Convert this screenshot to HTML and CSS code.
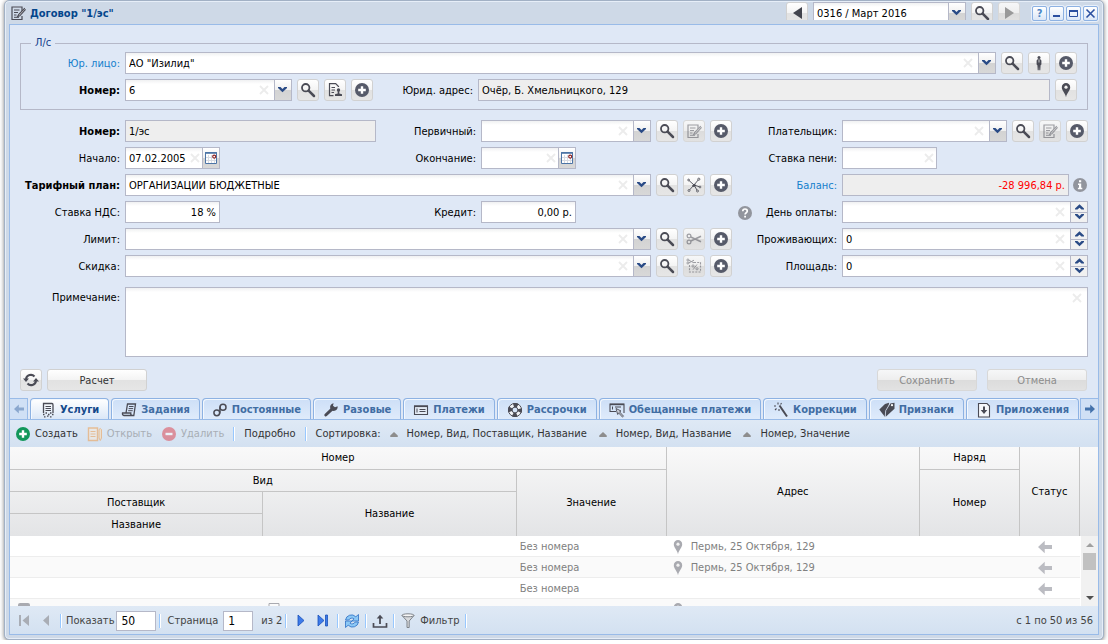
FILE: index.html
```html
<!DOCTYPE html>
<html lang="ru">
<head>
<meta charset="utf-8">
<title>Договор "1/эс"</title>
<link rel="stylesheet" href="styles.css">
</head>
<body>
<svg class="sprite" aria-hidden="true">
  <symbol id="i-search" viewBox="0 0 16 16"><circle cx="5.7" cy="5.7" r="3.7" fill="none" stroke="currentColor" stroke-width="1.8"/><path d="M8.6 8.6 14 14" stroke="currentColor" stroke-width="2.5" stroke-linecap="round"/></symbol>
  <symbol id="i-plus" viewBox="0 0 16 16"><circle cx="8" cy="8" r="7" fill="currentColor"/><path d="M8 4.2v7.6M4.2 8h7.6" stroke="#fff" stroke-width="2.4"/></symbol>
  <symbol id="i-doc-edit" viewBox="0 0 16 16"><path d="M12 6V2H2v12.5h10V11" fill="none" stroke="currentColor" stroke-width="1.2"/><path d="M4 5h5.500M4 7.500h4M4 10h2.500M4 12.300h5" stroke="currentColor"/><path d="M14.800 3.200 8.600 9.600 7.600 11.600 9.800 10.800 15.600 4.400" fill="#ddd" stroke="currentColor" stroke-width="1.100"/></symbol>
  <symbol id="i-doc-user" viewBox="0 0 16 16"><path d="M11.500 5V4.500L8.700 1.700H2.500v12h4" fill="none" stroke="currentColor" stroke-width="1.200"/><path d="M4.500 5.500h3.500M4.500 8h3.500M4.500 10.500h2.500" stroke="currentColor"/><circle cx="11.500" cy="8" r="1.700" fill="currentColor"/><path d="M10.700 9h1.600v2.400l2.700.8V14H8v-1.800l2.700-.8z" fill="currentColor"/></symbol>
  <symbol id="i-person" viewBox="0 0 16 16"><circle cx="8" cy="2.500" r="1.500" fill="currentColor"/><path d="M6.600 4.300h2.800l1 1.200V9.500l-.8.700-.3 5H8.300L8 11l-.3 4.200H6.700l-.3-5-.8-.7V5.500z" fill="currentColor"/><path d="M8 5v2.500" stroke="#eee" stroke-width=".8"/></symbol>
  <symbol id="i-pin" viewBox="0 0 16 16"><path d="M8 1a4.200 4.200 0 0 0-4.200 4.200C3.800 8.500 7 10.500 8 15.200c1-4.700 4.200-6.700 4.200-10A4.200 4.200 0 0 0 8 1z" fill="currentColor"/><circle cx="8" cy="5.200" r="1.600" fill="#f2f2f2"/></symbol>
  <symbol id="i-graph" viewBox="0 0 16 16"><path d="M8 8 2.500 3M8 8l5-6M8 8l6 2M8 8l-5 5.500M8 8l3.500 6" fill="none" stroke="currentColor" stroke-width=".9"/><path d="m6 8.500 3-1.800 1.200 2.200-3 1z" fill="currentColor"/><g fill="#e8e8e8" stroke="currentColor" stroke-width=".8"><circle cx="2.600" cy="3" r=".9"/><circle cx="12.800" cy="2.200" r="1.100"/><circle cx="14" cy="10" r=".9"/><circle cx="3" cy="13.500" r="1"/><circle cx="11.500" cy="14" r="1"/></g></symbol>
  <symbol id="i-scissors" viewBox="0 0 16 16"><g fill="none" stroke="currentColor" stroke-width="1.200"><circle cx="3" cy="5" r="1.900"/><circle cx="3" cy="11" r="1.900"/><path d="M4.800 6 15 10.800M4.800 10 15 5.200" stroke-width="1.500"/></g></symbol>
  <symbol id="i-coupon" viewBox="0 0 16 16"><path d="M8 4.500h6.500v9.500H3.500V7" fill="none" stroke="currentColor" stroke-dasharray="2 1.200" stroke-width="1.100"/><circle cx="1.900" cy="2" r="1" fill="none" stroke="currentColor"/><circle cx="1.900" cy="5" r="1" fill="none" stroke="currentColor"/><path d="m3 2.400 5 2.400M3 4.800l5-2.600M7 11.700l4-5.200" stroke="currentColor"/><circle cx="7" cy="8" r="1.100" fill="none" stroke="currentColor"/><circle cx="11" cy="10.800" r="1.100" fill="none" stroke="currentColor"/></symbol>
  <symbol id="i-x" viewBox="0 0 10 10"><path d="m1 1 8 8M9 1 1 9" stroke="currentColor" stroke-width="1.900"/></symbol>
  <symbol id="i-chev" viewBox="0 0 9 6"><path d="M0 0h2.500l2 1.900L6.500 0H9v1L4.500 5.300 0 1z" fill="#2a4b86"/></symbol>
  <symbol id="i-chev-up" viewBox="0 0 9 6"><path d="M0 5.600h2.500l2-1.900 2 1.900H9v-1L4.500.3 0 4.600z" fill="#2a4b86"/></symbol>
  <symbol id="i-cal" viewBox="0 0 14 14"><path d="M1.500 1.500h11v11h-11z" fill="#fff" stroke="#4d75a6"/><path d="M1 2h12" stroke="#4d75a6" stroke-width="1.600"/><path d="M4.500 4v8M7.500 4v8M10.500 4v8M2 6.500h10M2 9.500h10" stroke="#d8dbe2"/><circle cx="10.200" cy="5.600" r="1.500" fill="#fff" stroke="#8c2020" stroke-width="1.100"/></symbol>
  <symbol id="i-refresh" viewBox="0 0 16 16"><g fill="none" stroke="currentColor" stroke-width="2.100"><path d="M3 7a5 5 0 0 1 8.500-2.600"/><path d="M13 9a5 5 0 0 1-8.500 2.600"/></g><path d="M0 6.500h6L3 10zM10 9.500h6L13 6z" fill="currentColor"/></symbol>
  <symbol id="i-question" viewBox="0 0 16 16"><circle cx="8" cy="8" r="7" fill="#92959d"/><path d="M5.800 6.300c0-3 4.500-3 4.500-.2 0 1.700-2.200 1.600-2.200 3.400" fill="none" stroke="#fff" stroke-width="1.700"/><path d="M7.200 10.700H9v1.700H7.200z" fill="#fff"/></symbol>
  <symbol id="i-info" viewBox="0 0 16 16"><circle cx="8" cy="8" r="7" fill="#92959d"/><path d="M7 3.200h2.200v2H7zM6 6.500h3.200v4.300h1.100v1.500H5.900v-1.500H7V8H6z" fill="#fff"/></symbol>
  <symbol id="i-services" viewBox="0 0 16 16"><path d="M3.500 11V1.500h8.500q1 0 1 1.500v8" fill="none" stroke="currentColor" stroke-width="1.300"/><path d="M5.500 4.500H11M5.500 6.500H11M5.500 8.500H11" stroke="currentColor"/><path d="M3 12.500h1.500M5.500 11h1.500M8 12.500h1.500M10 11h1.500M12 12.500h1.500M4 14.800h1.500M7 14.200h1.500M10 14.800h1.500" stroke="currentColor" stroke-width="1.300"/></symbol>
  <symbol id="i-tasks" viewBox="0 0 16 16"><path d="M5 11 6.500 2h8l-1.700 11.500H3q-2-.5-1.500-2.500h8.300q-.3 2.300 1.200 2.500" fill="none" stroke="currentColor" stroke-width="1.300"/><path d="M8 4.500h4.500M7.600 6.600h4.500M7.200 8.700h4.500" stroke="currentColor"/></symbol>
  <symbol id="i-infinity" viewBox="0 0 16 16"><circle cx="11" cy="5.300" r="3" fill="none" stroke="currentColor" stroke-width="1.500"/><circle cx="4.800" cy="10.800" r="2.900" fill="none" stroke="currentColor" stroke-width="1.500"/><path d="M8.200 4.500C7 7 9 9 7.500 11.500" fill="none" stroke="currentColor" stroke-width="1.500"/></symbol>
  <symbol id="i-wrench" viewBox="0 0 16 16"><path d="M2.800 13 9 7.200" stroke="currentColor" stroke-width="3" stroke-linecap="round"/><path d="M14.600 4.300A3.800 3.800 0 1 1 10.600 1.300L10 3.800l2 1.500z" fill="currentColor"/></symbol>
  <symbol id="i-card" viewBox="0 0 16 16"><path d="M1.500 4h13v8.500h-13z" fill="#e4ebf5" stroke="currentColor" stroke-width="1.100"/><path d="M1 4.300h14" stroke="currentColor" stroke-width="1.600"/><path d="M4 6.500v4" stroke="currentColor"/><path d="M6.500 7.500h6M6.500 9.500h6" stroke="currentColor" stroke-width="1.200"/></symbol>
  <symbol id="i-buoy" viewBox="0 0 16 16"><circle cx="8" cy="8" r="5" fill="none" stroke="#f2f4f8" stroke-width="4"/><circle cx="8" cy="8" r="5" fill="none" stroke="currentColor" stroke-width="4" stroke-dasharray="4.300 3.550" stroke-dashoffset="2.150"/><circle cx="8" cy="8" r="6.600" fill="none" stroke="currentColor"/><circle cx="8" cy="8" r="2.900" fill="none" stroke="currentColor"/></symbol>
  <symbol id="i-promise" viewBox="0 0 16 16"><path d="M7 9.500H1V2h14v9" fill="none" stroke="currentColor" stroke-width="1.100"/><path d="M1 2.500h14" stroke="currentColor" stroke-width="1.400"/><path d="M3.500 4.500v3M6 5h6" stroke="currentColor"/><path d="m7 6.500 5 2.500-1.500.8 4 4.400-1 .9-4-4.300-.8 1.700z" fill="#d5d9e2" stroke="currentColor" stroke-width=".9"/></symbol>
  <symbol id="i-wand" viewBox="0 0 16 16"><path d="m6.500 3.500 7.500 11" stroke="currentColor" stroke-width="2"/><path d="M5 .500v2M8.500 1 7.600 2.500M1 4h2M2 8l1.500-1.500M6 7v2" stroke="currentColor" stroke-width="1.100"/></symbol>
  <symbol id="i-tags" viewBox="0 0 16 16"><path d="M.3 7.500 6 2l4-1.200L9.500 6l-3.500 9z" fill="currentColor"/><path d="M6.500 15 7 9l4-7.500L15.500.7v6z" fill="currentColor"/><path d="m11 1.500-4.300 7.200L6.200 15" fill="none" stroke="#dfe9f6" stroke-width=".8"/><circle cx="13" cy="3.200" r="1.100" fill="#fff"/></symbol>
  <symbol id="i-attach" viewBox="0 0 16 16"><path d="M2.500 1.500h8.500l2.500 2.500v11h-11z" fill="#f5f7fa" stroke="currentColor" stroke-width="1.100"/><path d="M7 4.500h2V8h2.300L8 12 4.700 8H7z" fill="currentColor"/></symbol>
  <symbol id="i-arrow-l" viewBox="0 0 10 10"><path d="M0 5 4.800.500v3H10v3H4.800v3z" fill="currentColor"/></symbol>
  <symbol id="i-arrow-r" viewBox="0 0 10 10"><path d="M10 5 5.200.500v3H0v3h5.200v3z" fill="currentColor"/></symbol>
  <symbol id="i-open" viewBox="0 0 16 16"><path d="M1.500 2h9v12.500h-9z" fill="#f8eadb" stroke="#f0963c" stroke-width="1.400"/><path d="M3.500 5.500h5M3.500 8h5M3.500 10.500h5" stroke="#f0963c"/><path d="M12 3.500q1.200-2 2.500 0V12l-1.200 2.500L12 12z" fill="#fbdcb0" stroke="#f0963c"/></symbol>
  <symbol id="i-sort" viewBox="0 0 9 6"><path d="M4.500 0 9 4.300V6H0V4.300z" fill="#8d8d8d"/></symbol>
  <symbol id="i-sync" viewBox="0 0 16 16"><path d="M1.500 7a6 6 0 0 1 10.300-3.200L14.500 1.500V8H8l2-2.200A3.500 3.500 0 0 0 4.800 7z" fill="#8cc8f5" stroke="#2e6fc4" stroke-width=".8"/><path d="M14.500 9A6 6 0 0 1 4.200 12.200L1.500 14.500V8H8L6 10.200A3.500 3.500 0 0 0 11.200 9z" fill="#8cc8f5" stroke="#2e6fc4" stroke-width=".8"/></symbol>
  <symbol id="i-export" viewBox="0 0 16 16"><path d="M1.500 10v4h13v-4" fill="none" stroke="currentColor" stroke-width="1.700"/><path d="M8 11V4" stroke="currentColor" stroke-width="1.800"/><path d="m4.700 5.500 3.300-3.700 3.300 3.700z" fill="currentColor"/></symbol>
  <symbol id="i-funnel" viewBox="0 0 16 16"><path d="M2 2.500 7 8v6.500h2.200V8L14 2.500z" fill="#d8dadd" stroke="#7f848b"/><ellipse cx="8" cy="2.300" rx="6" ry="1.500" fill="#f6f6f6" stroke="#7f848b"/></symbol>
</svg>

<main class="window">
  <header class="titlebar">
    <svg class="icon"><use href="#i-doc-edit"/></svg>
    <h1>Договор "1/эс"</h1>
    <div class="period">
      <button class="btn" type="button" aria-label="Предыдущий период"><span class="tri tri-left"></span></button>
      <div class="field period-field"><select aria-label="Период"><option>0316 / Март 2016</option></select><span class="trigger"><svg class="chev"><use href="#i-chev"/></svg></span></div>
      <button class="btn" type="button" aria-label="Найти период"><svg class="icon"><use href="#i-search"/></svg></button>
      <button class="btn" type="button" aria-label="Следующий период" disabled><span class="tri tri-right"></span></button>
    </div>
    <div class="tools">
      <button type="button" class="tool tool-help">?</button>
      <button type="button" class="tool" aria-label="Свернуть"><svg viewBox="0 0 11 11"><path d="M2 8h7" stroke="currentColor" stroke-width="2"/></svg></button>
      <button type="button" class="tool" aria-label="Развернуть"><svg viewBox="0 0 11 11"><path d="M1.500 2.500h8v6h-8z" fill="none" stroke="currentColor"/><path d="M1 3h9" stroke="currentColor" stroke-width="2"/></svg></button>
      <button type="button" class="tool" aria-label="Закрыть"><svg viewBox="0 0 11 11"><path d="m1.500 1.500 8 8M9.500 1.500l-8 8" stroke="currentColor" stroke-width="1.600"/></svg></button>
    </div>
  </header>

  <div class="content">
    <form class="form">
      <fieldset>
        <legend>Л/с</legend>
        <div class="row">
          <label class="label link" for="legal">Юр. лицо:</label>
          <div class="field"><select id="legal"><option>АО "Изилид"</option></select><button type="button" class="clear" aria-label="Очистить"><svg><use href="#i-x"/></svg></button><span class="trigger"><svg class="chev"><use href="#i-chev"/></svg></span></div>
          <button type="button" class="btn" aria-label="Найти"><svg class="icon"><use href="#i-search"/></svg></button>
          <button type="button" class="btn" aria-label="Лицо"><svg class="icon"><use href="#i-person"/></svg></button>
          <button type="button" class="btn" aria-label="Добавить"><svg class="icon soft"><use href="#i-plus"/></svg></button>
        </div>
        <div class="row">
          <label class="label bold" for="account">Номер:</label>
          <div class="field account"><select id="account"><option>6</option></select><button type="button" class="clear" aria-label="Очистить"><svg><use href="#i-x"/></svg></button><span class="trigger"><svg class="chev"><use href="#i-chev"/></svg></span></div>
          <button type="button" class="btn" aria-label="Найти"><svg class="icon"><use href="#i-search"/></svg></button>
          <button type="button" class="btn" aria-label="Карточка"><svg class="icon"><use href="#i-doc-user"/></svg></button>
          <button type="button" class="btn" aria-label="Добавить"><svg class="icon soft"><use href="#i-plus"/></svg></button>
          <label class="label" for="address">Юрид. адрес:</label>
          <div class="field readonly"><input id="address" value="Очёр, Б. Хмельницкого, 129" readonly></div>
          <button type="button" class="btn" aria-label="На карте"><svg class="icon"><use href="#i-pin"/></svg></button>
        </div>
      </fieldset>

      <div class="fields">
        <div class="row"><label class="label bold" for="num">Номер:</label><div class="field readonly"><input id="num" value="1/эс" readonly></div></div>
        <div class="row"><label class="label" for="primary">Первичный:</label>
          <div class="field"><select id="primary"><option></option></select><button type="button" class="clear" aria-label="Очистить"><svg><use href="#i-x"/></svg></button><span class="trigger"><svg class="chev"><use href="#i-chev"/></svg></span></div>
          <button type="button" class="btn" aria-label="Найти"><svg class="icon"><use href="#i-search"/></svg></button>
          <button type="button" class="btn" aria-label="Изменить" disabled><svg class="icon"><use href="#i-doc-edit"/></svg></button>
          <button type="button" class="btn" aria-label="Добавить"><svg class="icon soft"><use href="#i-plus"/></svg></button></div>
        <div class="row side"><label class="label" for="payer">Плательщик:</label>
          <div class="field"><select id="payer"><option></option></select><button type="button" class="clear" aria-label="Очистить"><svg><use href="#i-x"/></svg></button><span class="trigger"><svg class="chev"><use href="#i-chev"/></svg></span></div>
          <button type="button" class="btn" aria-label="Найти"><svg class="icon"><use href="#i-search"/></svg></button>
          <button type="button" class="btn" aria-label="Изменить" disabled><svg class="icon"><use href="#i-doc-edit"/></svg></button>
          <button type="button" class="btn" aria-label="Добавить"><svg class="icon soft"><use href="#i-plus"/></svg></button></div>

        <div class="row"><label class="label" for="start">Начало:</label><div class="field short"><input id="start" value="07.02.2005"><button type="button" class="clear" aria-label="Очистить"><svg><use href="#i-x"/></svg></button><button type="button" class="trigger" aria-label="Календарь"><svg class="cal"><use href="#i-cal"/></svg></button></div></div>
        <div class="row"><label class="label" for="end">Окончание:</label><div class="field short"><input id="end"><button type="button" class="clear" aria-label="Очистить"><svg><use href="#i-x"/></svg></button><button type="button" class="trigger" aria-label="Календарь"><svg class="cal"><use href="#i-cal"/></svg></button></div></div>
        <div class="row side"><label class="label" for="penalty">Ставка пени:</label><div class="field short"><input id="penalty"><button type="button" class="clear" aria-label="Очистить"><svg><use href="#i-x"/></svg></button></div></div>

        <div class="row wide"><label class="label bold" for="tariff">Тарифный план:</label>
          <div class="field"><select id="tariff"><option>ОРГАНИЗАЦИИ БЮДЖЕТНЫЕ</option></select><button type="button" class="clear" aria-label="Очистить"><svg><use href="#i-x"/></svg></button><span class="trigger"><svg class="chev"><use href="#i-chev"/></svg></span></div>
          <button type="button" class="btn" aria-label="Найти"><svg class="icon"><use href="#i-search"/></svg></button>
          <button type="button" class="btn" aria-label="Связи"><svg class="icon"><use href="#i-graph"/></svg></button>
          <button type="button" class="btn" aria-label="Добавить"><svg class="icon soft"><use href="#i-plus"/></svg></button></div>
        <div class="row side"><label class="label link" for="balance">Баланс:</label><div class="field readonly num"><input class="negative" id="balance" value="-28 996,84 р." readonly></div><svg class="icon hint"><use href="#i-info"/></svg></div>

        <div class="row"><label class="label" for="vat">Ставка НДС:</label><div class="field short num"><input id="vat" value="18 %"></div></div>
        <div class="row"><label class="label" for="credit">Кредит:</label><div class="field short num"><input id="credit" value="0,00 р."></div></div>
        <div class="row side"><span class="label label-hint"><svg class="icon"><use href="#i-question"/></svg><label for="payday">День оплаты:</label></span><div class="field"><input id="payday"><button type="button" class="clear" aria-label="Очистить"><svg><use href="#i-x"/></svg></button><span class="spinner"><button type="button" aria-label="Больше"><svg class="chev"><use href="#i-chev-up"/></svg></button><button type="button" aria-label="Меньше"><svg class="chev"><use href="#i-chev"/></svg></button></span></div></div>

        <div class="row wide"><label class="label" for="limit">Лимит:</label>
          <div class="field"><select id="limit"><option></option></select><button type="button" class="clear" aria-label="Очистить"><svg><use href="#i-x"/></svg></button><span class="trigger"><svg class="chev"><use href="#i-chev"/></svg></span></div>
          <button type="button" class="btn" aria-label="Найти"><svg class="icon"><use href="#i-search"/></svg></button>
          <button type="button" class="btn" aria-label="Отрезать" disabled><svg class="icon"><use href="#i-scissors"/></svg></button>
          <button type="button" class="btn" aria-label="Добавить"><svg class="icon soft"><use href="#i-plus"/></svg></button></div>
        <div class="row side"><label class="label" for="people">Проживающих:</label><div class="field"><input id="people" value="0"><button type="button" class="clear" aria-label="Очистить"><svg><use href="#i-x"/></svg></button><span class="spinner"><button type="button" aria-label="Больше"><svg class="chev"><use href="#i-chev-up"/></svg></button><button type="button" aria-label="Меньше"><svg class="chev"><use href="#i-chev"/></svg></button></span></div></div>

        <div class="row wide"><label class="label" for="discount">Скидка:</label>
          <div class="field"><select id="discount"><option></option></select><button type="button" class="clear" aria-label="Очистить"><svg><use href="#i-x"/></svg></button><span class="trigger"><svg class="chev"><use href="#i-chev"/></svg></span></div>
          <button type="button" class="btn" aria-label="Найти"><svg class="icon"><use href="#i-search"/></svg></button>
          <button type="button" class="btn" aria-label="Купон" disabled><svg class="icon"><use href="#i-coupon"/></svg></button>
          <button type="button" class="btn" aria-label="Добавить"><svg class="icon soft"><use href="#i-plus"/></svg></button></div>
        <div class="row side"><label class="label" for="area">Площадь:</label><div class="field"><input id="area" value="0"><button type="button" class="clear" aria-label="Очистить"><svg><use href="#i-x"/></svg></button><span class="spinner"><button type="button" aria-label="Больше"><svg class="chev"><use href="#i-chev-up"/></svg></button><button type="button" aria-label="Меньше"><svg class="chev"><use href="#i-chev"/></svg></button></span></div></div>
      </div>

      <div class="row note-row"><label class="label" for="note">Примечание:</label><div class="field note"><textarea id="note"></textarea><button type="button" class="clear" aria-label="Очистить"><svg><use href="#i-x"/></svg></button></div></div>

      <div class="actions">
        <button type="button" class="btn" aria-label="Обновить"><svg class="icon"><use href="#i-refresh"/></svg></button>
        <button type="button" class="btn text">Расчет</button>
        <span class="actions-end">
          <button type="button" class="btn text" disabled>Сохранить</button>
          <button type="button" class="btn text" disabled>Отмена</button>
        </span>
      </div>
    </form>

    <nav class="tabs">
      <button type="button" class="scroll off" aria-label="Влево"><svg><use href="#i-arrow-l"/></svg></button>
      <div class="tablist" role="tablist">
        <button type="button" role="tab" class="tab active"><svg class="icon"><use href="#i-services"/></svg>Услуги</button>
        <button type="button" role="tab" class="tab"><svg class="icon"><use href="#i-tasks"/></svg>Задания</button>
        <button type="button" role="tab" class="tab"><svg class="icon"><use href="#i-infinity"/></svg>Постоянные</button>
        <button type="button" role="tab" class="tab"><svg class="icon"><use href="#i-wrench"/></svg>Разовые</button>
        <button type="button" role="tab" class="tab"><svg class="icon"><use href="#i-card"/></svg>Платежи</button>
        <button type="button" role="tab" class="tab"><svg class="icon"><use href="#i-buoy"/></svg>Рассрочки</button>
        <button type="button" role="tab" class="tab"><svg class="icon"><use href="#i-promise"/></svg>Обещанные платежи</button>
        <button type="button" role="tab" class="tab"><svg class="icon"><use href="#i-wand"/></svg>Коррекции</button>
        <button type="button" role="tab" class="tab"><svg class="icon"><use href="#i-tags"/></svg>Признаки</button>
        <button type="button" role="tab" class="tab"><svg class="icon"><use href="#i-attach"/></svg>Приложения</button>
      </div>
      <button type="button" class="scroll" aria-label="Вправо"><svg><use href="#i-arrow-r"/></svg></button>
    </nav>

    <div class="toolbar">
      <button type="button" class="tb"><svg class="icon green"><use href="#i-plus"/></svg>Создать</button>
      <button type="button" class="tb" disabled><svg class="icon"><use href="#i-open"/></svg>Открыть</button>
      <button type="button" class="tb" disabled><svg class="icon" viewBox="0 0 16 16"><circle cx="8" cy="8" r="7" fill="#dc3c48"/><path d="M4.500 8h7" stroke="#fff" stroke-width="2.400"/></svg>Удалить</button>
      <span class="sep"></span>
      <button type="button" class="tb">Подробно</button>
      <span class="sep"></span>
      <span class="tb">Сортировка:</span>
      <button type="button" class="tb sort"><svg><use href="#i-sort"/></svg>Номер, Вид, Поставщик, Название</button>
      <button type="button" class="tb sort"><svg><use href="#i-sort"/></svg>Номер, Вид, Название</button>
      <button type="button" class="tb sort"><svg><use href="#i-sort"/></svg>Номер, Значение</button>
    </div>

    <div class="grid">
      <table>
        <colgroup><col><col><col class="c-value"><col><col class="c-order"><col class="c-status"><col class="c-end"></colgroup>
        <thead>
          <tr><th colspan="3">Номер</th><th rowspan="4" class="low">Адрес</th><th>Наряд</th><th rowspan="4" class="low">Статус</th><th rowspan="4" class="low end"></th></tr>
          <tr><th colspan="2">Вид</th><th rowspan="3" class="low">Значение</th><th rowspan="3" class="low">Номер</th></tr>
          <tr><th>Поставщик</th><th rowspan="2" class="low">Название</th></tr>
          <tr><th class="low">Название</th></tr>
        </thead>
        <tbody>
          <tr><td></td><td></td><td>Без номера</td><td><span class="place"><svg class="icon"><use href="#i-pin"/></svg>Пермь, 25 Октября, 129</span></td><td></td><td class="status"><svg><use href="#i-arrow-l"/></svg></td><td></td></tr>
          <tr><td></td><td></td><td>Без номера</td><td><span class="place"><svg class="icon"><use href="#i-pin"/></svg>Пермь, 25 Октября, 129</span></td><td></td><td class="status"><svg><use href="#i-arrow-l"/></svg></td><td></td></tr>
          <tr><td></td><td></td><td>Без номера</td><td></td><td></td><td class="status"><svg><use href="#i-arrow-l"/></svg></td><td></td></tr>
          <tr><td><span class="place lead"><svg class="icon" viewBox="0 0 16 16"><rect x="2" y="1" width="12" height="14" rx="2" fill="currentColor"/></svg></span></td><td><span class="place"><svg class="icon" viewBox="0 0 16 16"><path d="M3 1.500h10v13H3z" fill="none" stroke="currentColor"/></svg></span></td><td></td><td><span class="place"><svg class="icon"><use href="#i-pin"/></svg></span></td><td></td><td></td><td></td></tr>
        </tbody>
      </table>
      <div class="scrollbar" aria-hidden="true"><span class="tri tri-up"></span><span class="thumb"></span><span class="tri tri-down"></span></div>
    </div>

    <footer class="toolbar paging">
      <button type="button" class="pg" disabled aria-label="Первая"><svg viewBox="0 0 12 13"><path d="M1 1h2v11H1zM11 1v11L4.500 6.500z" fill="#a9adb5"/></svg></button>
      <button type="button" class="pg" disabled aria-label="Предыдущая"><svg viewBox="0 0 12 13"><path d="M9 1v11L3 6.500z" fill="#a9adb5"/></svg></button>
      <span class="sep"></span>
      <label class="show" for="size">Показать</label><input class="page-input size" id="size" value="50">
      <span class="sep"></span>
      <label class="page-label" for="page">Страница</label><input class="page-input" id="page" value="1">
      <span class="total">из 2</span>
      <span class="sep"></span>
      <button type="button" class="pg" aria-label="Следующая"><svg viewBox="0 0 12 13"><path d="M3 1v11l6-5.500z" fill="#3d7bea" stroke="#1b50b8" stroke-width=".8"/></svg></button>
      <button type="button" class="pg" aria-label="Последняя"><svg viewBox="0 0 12 13"><path d="M1 1v11l6-5.500zM8.500 1h2v11h-2z" fill="#3d7bea" stroke="#1b50b8" stroke-width=".8"/></svg></button>
      <span class="sep"></span>
      <button type="button" class="tb" aria-label="Обновить"><svg class="icon"><use href="#i-sync"/></svg></button>
      <span class="sep"></span>
      <button type="button" class="tb" aria-label="Выгрузить"><svg class="icon"><use href="#i-export"/></svg></button>
      <span class="sep"></span>
      <button type="button" class="tb filter"><svg class="icon"><use href="#i-funnel"/></svg>Фильтр</button>
      <span class="sep"></span>
      <span class="range">с 1 по 50 из 56</span>
    </footer>
  </div>
</main>
</body>
</html>
```
FILE: styles.css
```css
* { box-sizing: border-box; }
body {
  margin: 0;
  background: #fff;
  font: 11px/14px "DejaVu Sans Condensed", Tahoma, "Noto Sans", sans-serif;
  color: #000;
}
button, input, select, textarea { font: inherit; color: inherit; margin: 0; padding: 0; border: 0; background: none; outline: 0; }
button { display: flex; align-items: center; justify-content: center; white-space: nowrap; }
svg { display: block; flex: none; }
.sprite { position: absolute; width: 0; height: 0; }
.icon { width: 16px; height: 16px; color: #4a4b55; }
.soft { color: #565a69; }
.green { color: #12975a; }
.chev { width: 9px; height: 6px; }

.window {
  display: flex;
  flex-direction: column;
  height: calc(100vh - 4px);
  margin: 0 4px;
  padding: 0 4px 4px;
  border: 1px solid #a2b1c5;
  border-radius: 5px;
  background: #ced9e7;
  box-shadow: inset 0 0 0 1px #e6eef8, 0 1px 4px rgba(0, 0, 0, .5);
}
.titlebar { display: flex; align-items: flex-start; height: 23px; padding: 1px 1px 0 0; }
.titlebar > .icon { margin: 3px 4px 0 1px; }
h1 { flex: 1; margin: 4px 0 0; font-size: 11px; line-height: 15px; color: #04468c; }
.period { display: flex; gap: 5px; height: 18px; overflow: hidden; }
.period-field { width: 153px; flex: none; }
.tools { display: flex; gap: 2px; margin: 4px 0 0 12px; }
.tool { width: 15px; height: 15px; border: 1px solid #8db2e3; border-radius: 2px; background: linear-gradient(#fff, #dbe7f7); color: #2a4fa0; box-shadow: 0 0 0 1px #e8f0fa; }
.tool-help { font-weight: bold; color: #4a86c5; }
.tool svg { width: 11px; height: 11px; }

.content { flex: 1; min-height: 0; display: flex; flex-direction: column; border: 1px solid #99bbe8; background: #dfe8f6; }
.form { padding: 11px 10px 7px; }
fieldset { display: grid; gap: 5px; min-width: 0; margin: 0 0 10px; padding: 2px 10px 8px 4px; border: 1px solid #b5b8c8; }
legend { margin-left: 6px; padding: 0 4px; color: #15428b; }
.fields { display: grid; grid-template-columns: repeat(3, minmax(0, 1fr)); gap: 5px 0; }
.wide { grid-column: span 2; }
.row { display: flex; align-items: center; gap: 5px; min-width: 0; }
.label { flex: none; width: 100px; padding-top: 1px; text-align: right; white-space: nowrap; }
fieldset .label { width: 95px; }
.side .label { width: 105px; }
.bold { font-weight: bold; }
.link { color: #157fcc; }
.label-hint { display: flex; align-items: center; justify-content: space-between; padding-left: 5px; }
.field { display: flex; flex: 1; align-items: stretch; min-width: 0; height: 22px; border: 1px solid #b5b8c8; background: linear-gradient(#f0f1f2, #fff 4px); }
.field input, .field select { flex: 1; min-width: 0; width: 0; padding: 1px 3px 0; }
.field select { appearance: none; }
.readonly { background: #eee; }
.short { flex: none; width: 95px; }
.account { flex: none; width: 167px; }
.num input { text-align: right; }
.field .negative { color: #f00; }
.hint { margin: 0 0 0 -2px; }
.clear { flex: none; width: 20px; color: #ececec; }
.clear svg { width: 10px; height: 10px; }
.trigger { flex: none; display: flex; align-items: center; justify-content: center; width: 17px; padding: 0 1px 1px 0; border-left: 1px solid #b5b8c8; background: linear-gradient(#fff, #f0f0f0 50%, #d3d3d3 51%, #d8d8d8); }
.short:not(.num) input { padding-right: 0; }
.short .clear { width: 15px; }
.cal { width: 14px; height: 14px; }
.spinner { display: flex; flex-direction: column; width: 17px; border-left: 1px solid #b5b8c8; }
.spinner button { flex: 1; background: #f1f1f1; }
.spinner button + button { border-top: 1px solid #b5b8c8; }
.btn { flex: none; width: 22px; height: 22px; border: 1px solid #d1d1d1; border-radius: 3px; background: linear-gradient(#fff, #f4f4f4 48%, #e2e2e2 52%, #e6e6e6); color: #333; }
.btn:disabled { background: linear-gradient(#f6f7f8, #eee 48%, #dcdcdc 52%, #e2e2e2); color: #8c8c8c; border-color: #d8d8d8; }
.btn:disabled .icon { opacity: .5; }
.btn.text { width: 100px; padding-top: 1px; }
.tri { border: 6px solid transparent; width: 0; height: 0; }
.tri-left { border-right: 9px solid #42444d; border-left: 0; }
.tri-right { border-left: 9px solid #999; border-right: 0; }
.note-row { margin-top: 10px; align-items: flex-start; }
.note-row .label { padding-top: 4px; }
.note { height: 70px; }
.note textarea { flex: 1; resize: none; padding: 3px; }
.note .clear { height: 20px; }
.actions { display: flex; gap: 5px; margin-top: 12px; }
.actions-end { display: flex; gap: 10px; margin-left: auto; padding-right: 1px; }

.tabs { display: flex; flex: none; height: 22px; border-bottom: 1px solid #99bbe8; background: #dfe8f6; }
.tablist { flex: 1; display: flex; gap: 2px; min-width: 0; padding: 0 1px 0 2px; overflow: hidden; }
.tab { flex: 1 1 auto; gap: 4px; height: 21px; padding: 1px 6px 0; border: 1px solid #8db2e3; border-bottom: 0; border-radius: 4px 4px 0 0; background: linear-gradient(#cddff7, #dfebfb); box-shadow: inset 1px 1px 0 #f3f8fe; font-weight: bold; color: #416da3; }
.tab.active { color: #15498b; background: linear-gradient(#fff, #dbe7f7); }
.scroll { width: 18px; height: 21px; border: 1px solid #99bbe8; border-width: 1px 1px 0 0; background: #d0e0f5; color: #4472ab; }
.scroll:last-child { border-width: 1px 0 0 1px; }
.scroll.off { color: #8aa7ce; }
.scroll svg { width: 10px; height: 10px; }

.toolbar { display: flex; flex: none; align-items: center; height: 27px; padding: 1px 5px 0; background: linear-gradient(#dfe9f5, #d3e1f1); color: #333; }
.tb { display: flex; align-items: center; gap: 4px; margin-right: 9px; white-space: nowrap; }
.tb:disabled { opacity: .5; color: #777; }
.sep { flex: none; width: 2px; height: 14px; border-left: 1px solid #98c8ff; border-right: 1px solid #fff; margin-right: 9px; }
.sort { gap: 9px; margin-right: 12px; }
.sort svg { width: 8px; height: 5px; }

.grid { position: relative; flex: 1; min-height: 0; overflow: hidden; background: #fff; }
table { width: 100%; border-collapse: separate; border-spacing: 0; table-layout: fixed; }
.c-value { width: 150px; }
.c-order { width: 100px; }
.c-status { width: 60px; }
.c-end { width: 18px; }
thead { background: linear-gradient(#f9f9f9, #e3e4e6); }
th { height: 22px; padding: 0; border: 1px solid #c5c5c5; border-width: 0 1px 1px 0; font-weight: normal; }
thead tr:first-child th { height: 23px; }
th.low { border-bottom: 0; }
th.end { border-right: 0; }
td { height: 21px; padding: 1px 3px 0; border-bottom: 1px solid #ededed; color: #808080; white-space: nowrap; }
tr:nth-child(even) td { background: #fafafa; }
tr td:last-child, tr:nth-child(even) td:last-child { border-bottom: 0; background: #fff; }
.place { display: flex; align-items: center; gap: 5px; }
.place .icon { color: #a9aab0; }
.lead { padding-left: 3px; }
td.status { padding-right: 13px; }
.status svg { width: 14px; height: 14px; margin: 0 auto; color: #bbbcc2; }
.scrollbar { position: absolute; top: 89px; right: 0; bottom: 0; width: 17px; display: flex; flex-direction: column; align-items: center; padding: 7px 0 6px; background: #f1f1f1; }
.scrollbar .tri { border-width: 4px; }
.scrollbar .tri-up { border-bottom-color: #a0a0a0; border-top: 0; }
.scrollbar .tri-down { border-top-color: #505050; border-bottom: 0; margin-top: auto; }
.thumb { width: 13px; height: 17px; margin-top: 6px; background: #c1c1c1; }

.paging { height: 28px; padding-left: 3px; color: #444; }
.pg { width: 22px; height: 22px; }
.pg svg { width: 12px; height: 13px; }
.paging .sep { margin: 0 3px; }
.page-input { width: 30px; height: 20px; padding: 0 4px; border: 1px solid #b5b8c8; background: #fff; color: #000; font-size: 12px; }
.size { width: 40px; }
.show { margin: 0 2px 0 1px; }
.page-label { margin: 0 5px 0 3px; }
.total { margin: 0 0 0 8px; }
.paging .tb { margin: 0 2px; }
.range { margin-left: auto; }
```
